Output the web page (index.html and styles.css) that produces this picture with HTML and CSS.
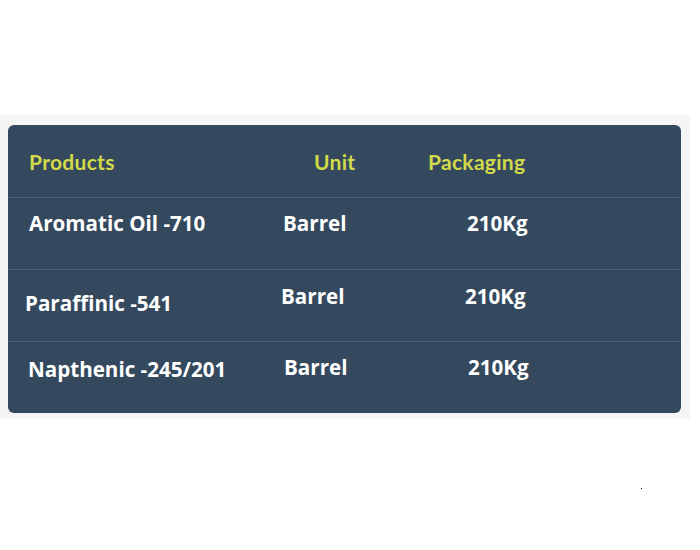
FILE: index.html
```html
<!DOCTYPE html>
<html>
<head>
<meta charset="utf-8">
<link rel="stylesheet" href="styles.css">
</head>
<body>
<div class="band">
  <div class="card">
    <div class="row head">
      <div class="c1">Products</div>
      <div class="c2">Unit</div>
      <div class="c3">Packaging</div>
    </div>
    <div class="row r1">
      <div class="c1">Aromatic Oil -710</div>
      <div class="c2">Barrel</div>
      <div class="c3">210Kg</div>
    </div>
    <div class="row r2">
      <div class="c1">Paraffinic -541</div>
      <div class="c2">Barrel</div>
      <div class="c3">210Kg</div>
    </div>
    <div class="row r3">
      <div class="c1">Napthenic -245/201</div>
      <div class="c2">Barrel</div>
      <div class="c3">210Kg</div>
    </div>
  </div>
</div>
<div class="dot"></div>
</body>
</html>
```
FILE: styles.css
```css
html, body {
  margin: 0;
  padding: 0;
  background: #ffffff;
}
body {
  width: 700px;
  height: 550px;
  position: relative;
  font-family: "Open Sans", "Noto Sans", sans-serif;
}
.band {
  margin-top: 115px;
  width: 690px;
  height: 304px;
  background: #f5f5f5;
  padding: 10px 0 0 8px;
  box-sizing: border-box;
}
.card {
  width: 673px;
  height: 288px;
  background: #34495e;
  border-radius: 6px;
  overflow: hidden;
}
.row {
  display: grid;
  grid-template-columns: 275px 184px 1fr;
  height: 72px;
  box-sizing: border-box;
  border-bottom: 1px solid #4b6380;
  color: #ffffff;
  font-weight: 700;
  font-size: 20.6px;
  line-height: 28px;
}
.row:last-child {
  border-bottom: none;
}
.row .c1 { padding-left: 21px; }
.head {
  height: 73px;
  grid-template-columns: 306px 114px 1fr;
  color: #d3da4a;
  font-family: "Lato", sans-serif;
  font-weight: 700;
  font-size: 21px;
  letter-spacing: 0.3px;
  padding-top: 23px;
}
.r1 { padding-top: 11px; }
.r2 { padding-top: 12px; margin-left: -2px; }
.r2 .c1 { padding-left: 19px; padding-top: 7px; }
.r3 { padding-top: 11px; margin-left: 1px; }
.r3 .c1 { padding-left: 19px; padding-top: 2px; }
.dot {
  position: absolute;
  left: 641px;
  top: 488px;
  width: 1px;
  height: 1px;
  background: #000;
}
```
